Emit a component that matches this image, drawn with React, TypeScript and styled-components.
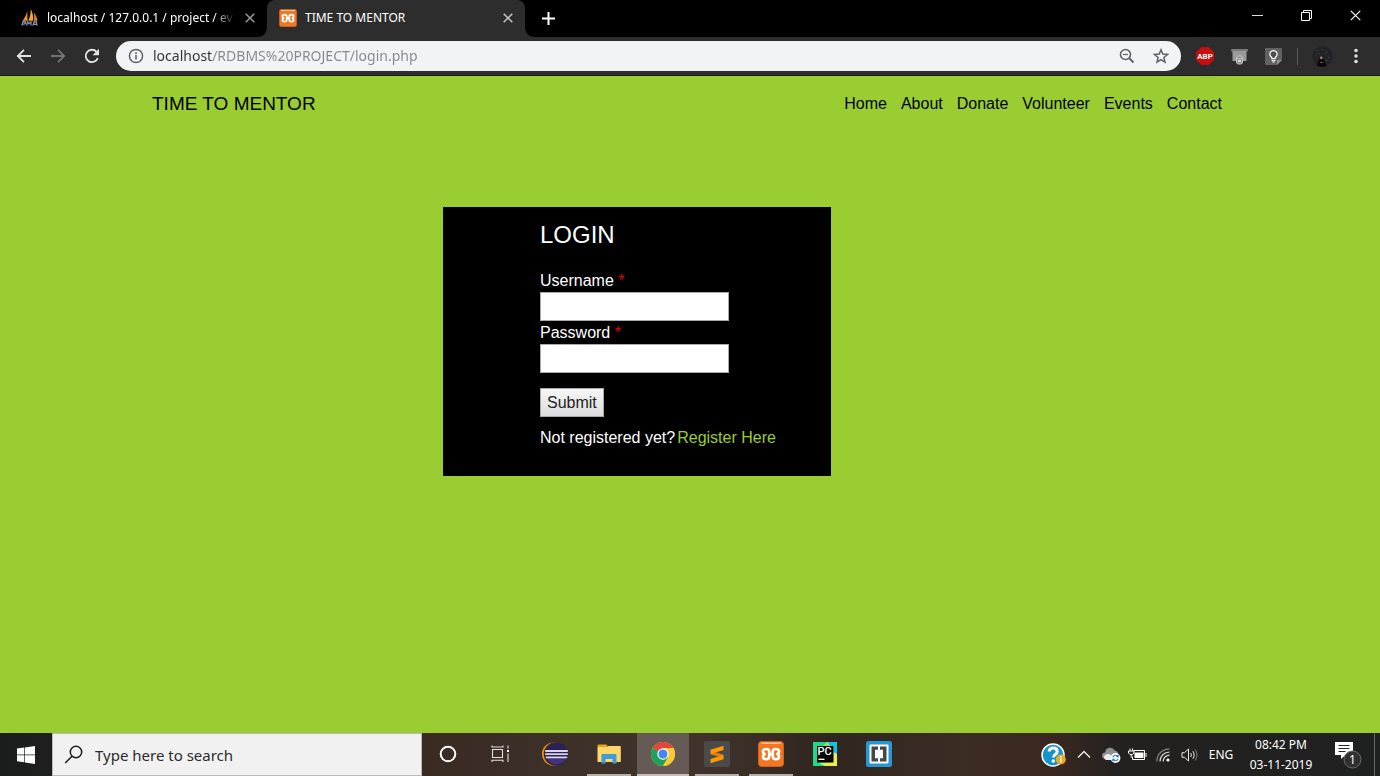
import React from "react";
import styled, { createGlobalStyle } from "styled-components";

const SYSTEM = `"Segoe UI", "Noto Sans", "Open Sans", sans-serif`;
const PAGE = `Arial, "Liberation Sans", sans-serif`;
const GREEN = "#9acd32";

const GlobalStyle = createGlobalStyle`
  *, *::before, *::after { box-sizing: border-box; }
  body { margin: 0; background: ${GREEN}; }
  button, input { font: inherit; margin: 0; }
  svg { display: block; flex: none; }
`;

const Screen = styled.div`
  display: flex;
  flex-direction: column;
  min-height: 100vh;
`;

/* ---------- browser chrome ---------- */

const BareButton = styled.button`
  display: flex;
  align-items: center;
  justify-content: center;
  padding: 0;
  border: 0;
  background: none;
  color: inherit;
`;

const TabStrip = styled.div`
  display: flex;
  height: 37px;
  background: #000;
  color: #fff;
  font: 12px/18px ${SYSTEM};
`;

const Tab = styled.div<{ $active?: boolean }>`
  display: flex;
  align-items: center;
  position: relative;
  width: ${(p) => (p.$active ? 258 : 267)}px;
  padding: 0 8px 2px ${(p) => (p.$active ? 12 : 21)}px;
  border-radius: 8px 8px 0 0;
  background: ${(p) => (p.$active ? "#2d2d2d" : "transparent")};

  ${(p) =>
    p.$active &&
    `
    &::before, &::after {
      content: "";
      position: absolute;
      bottom: 0;
      width: 8px;
      height: 8px;
    }
    &::before {
      left: -8px;
      background: radial-gradient(circle at 0 0, transparent 7px, #2d2d2d 8px);
    }
    &::after {
      right: -8px;
      background: radial-gradient(circle at 100% 0, transparent 7px, #2d2d2d 8px);
    }
  `}
`;

const TabTitle = styled.span<{ $fade?: boolean }>`
  flex: 1;
  min-width: 0;
  margin-left: 8px;
  overflow: hidden;
  white-space: nowrap;
  ${(p) => p.$fade && "mask-image: linear-gradient(to right, #000 88%, transparent 100%);"}
`;

const TabClose = styled(BareButton)<{ $dim?: boolean }>`
  width: 18px;
  height: 18px;
  margin-left: 5px;
  color: ${(p) => (p.$dim ? "#9a9a9a" : "#c8c8c8")};
`;

const NewTab = styled(BareButton)`
  width: 28px;
  margin-left: 9px;
`;

const WindowControls = styled.div`
  display: flex;
  margin-left: auto;
`;

const WindowButton = styled(BareButton)`
  width: 49px;
  padding-bottom: 6px;
`;

const Toolbar = styled.div`
  display: flex;
  align-items: center;
  height: 39px;
  padding: 0 7px;
  background: #2d2d2d;
  border-bottom: 1px solid #1b1b1b;
  color: #dedede;
`;

const NavButton = styled(BareButton)<{ $dim?: boolean }>`
  width: 34px;
  height: 30px;
  color: ${(p) => (p.$dim ? "#747474" : "#e4e4e4")};
`;

const AddressBar = styled.div`
  display: flex;
  align-items: center;
  flex: 1;
  height: 30px;
  margin: 0 7px;
  padding: 0 3px 0 12px;
  border-radius: 15px;
  background: #f1f3f4;
  color: #5f6368;
`;

const Address = styled.input`
  flex: 1;
  min-width: 0;
  height: 24px;
  margin-left: 9px;
  padding: 0;
  border: 0;
  outline: 0;
  background: linear-gradient(to right, #303134 60px, #84888c 60px);
  background-clip: text;
  -webkit-background-clip: text;
  color: transparent;
  font: 14px/24px ${SYSTEM};
`;

const ToolButton = styled(BareButton)`
  width: 34px;
  height: 30px;
`;

const Divider = styled.span`
  width: 1px;
  height: 17px;
  margin: 0 7px;
  background: #5c5c5c;
`;

/* ---------- web page ---------- */

const Page = styled.main`
  flex: 1;
  background: ${GREEN};
  color: #111;
  font: 16px/23px ${PAGE};
`;

const Header = styled.header`
  display: flex;
  align-items: center;
  justify-content: space-between;
  max-width: 1106px;
  height: 54px;
  margin: 0 auto;
  padding: 0 14px 0 15px;
`;

const Brand = styled.a`
  color: #000;
  font-size: 19px;
  text-decoration: none;
`;

const Menu = styled.nav`
  display: flex;
`;

const MenuLink = styled.a`
  padding: 7px;
  color: #000;
  text-decoration: none;
`;

const LoginArea = styled.div`
  display: grid;
  grid-template-columns: 443fr 388fr 549fr;
  padding: 77px 0 40px;
`;

const LoginForm = styled.form`
  grid-column: 2;
  display: flex;
  flex-direction: column;
  align-items: flex-start;
  padding: 14px 0 27px 25%;
  background: #000;
  color: #fff;
`;

const LoginTitle = styled.h1`
  margin: 0 0 20px;
  font-size: 24px;
  font-weight: 400;
  line-height: 28px;
`;

const FieldLabel = styled.label`
  line-height: 23px;
`;

const Required = styled.span`
  color: #e00000;
`;

const Field = styled.input`
  width: 189px;
  height: 29px;
  padding: 2px 6px;
  border: 1px solid #a9a9a9;
  background: #fff;
`;

const Submit = styled.button`
  height: 29px;
  margin: 15px 0 9px;
  padding: 0 6px;
  border: 1px solid #a9a9a9;
  background: linear-gradient(#f6f6f6, #dddddd);
  color: #222;
`;

const RegisterLine = styled.p`
  display: flex;
  gap: 2px;
  margin: 0;
  white-space: nowrap;
`;

const RegisterLink = styled.a`
  color: ${GREEN};
  text-decoration: none;
`;

/* ---------- taskbar ---------- */

const Taskbar = styled.footer`
  display: flex;
  height: 43px;
  background: linear-gradient(to right, #1b1d1d 0, #1e1e1e 52px, #3a2a22 423px, #3c3029 560px, #41332b 700px, #30261f 830px, #3b2c24 960px, #3a2820 1050px, #232120 1120px, #1f2120 100%);
  color: #fff;
  font-family: ${SYSTEM};
`;

const StartButton = styled(BareButton)`
  width: 52px;
`;

const SearchBox = styled.label`
  display: flex;
  align-items: center;
  width: 370px;
  padding: 0 11px;
  border: 1px solid #b9b9b9;
  background: #f1f1f1;
  color: #1c1c1c;
`;

const SearchInput = styled.input`
  flex: 1;
  min-width: 0;
  margin-left: 12px;
  padding: 0;
  border: 0;
  outline: 0;
  background: none;
  font-size: 15px;
  line-height: 24px;
  &::placeholder { color: #2b2b2b; opacity: 1; }
`;

const TaskGroup = styled.div<{ $apps?: boolean }>`
  display: flex;
  gap: ${(p) => (p.$apps ? 2 : 0)}px;
  margin-left: ${(p) => (p.$apps ? 3 : 0)}px;
`;

const TaskButton = styled(BareButton)<{ $open?: boolean; $active?: boolean }>`
  width: 52px;
  border-bottom: 2px solid transparent;
  ${(p) =>
    p.$open &&
    "background: linear-gradient(#b5afac, #b5afac) center bottom / 44px 2px no-repeat border-box;"}
  ${(p) => p.$active && "background: #655a54; border-bottom-color: #c3bebb;"}
`;

const Tray = styled.div`
  display: flex;
  align-items: center;
  margin-left: auto;
`;

const TrayButton = styled(BareButton)<{ $w: number }>`
  width: ${(p) => p.$w}px;
  height: 43px;
  font-size: 12px;
`;

const Clock = styled.div`
  width: 82px;
  font-size: 12px;
  line-height: 20px;
  text-align: center;
`;

const ShowDesktop = styled(BareButton)`
  width: 6px;
  height: 43px;
  border-left: 1px solid #666;
`;

/* ---------- icons ---------- */

const Cross = ({ size = 10, w = 1.5 }: { size?: number; w?: number }) => (
  <svg width={size} height={size} viewBox="0 0 10 10" fill="none" stroke="currentColor" strokeWidth={w}>
    <path d="M.7.7l8.6 8.6M9.3.7L.7 9.3" />
  </svg>
);

const PmaIcon = () => (
  <svg width="18" height="19" viewBox="0 0 19 19">
    <path d="M6.500 2.500L7 13H1.500C4 10 6 6.500 6.500 2.500z" fill="#e8932c" />
    <path d="M10.200.5c2.300 4 3 8 2.600 12.500H7.600C9.600 9 10.400 5 10.200.5z" fill="#f9a233" />
    <path d="M13.500 4c2.200 3 3.600 6 4 9h-4c.6-3 .6-6 0-9z" fill="#d9822b" />
    <path d="M1 18l1-4h2.500l.3 1.500L2.500 17M6 18l1-4 1.500 2 2-2v4M12.500 18l1.500-4h2l1 4M13.500 16.700h3" fill="none" stroke="#8b8db0" strokeWidth="1.400" />
  </svg>
);

const XamppIcon = ({ size }: { size: number }) => (
  <svg width={size} height={size} viewBox="0 0 26 26">
    <rect x=".5" y=".5" width="25" height="25" rx="3" fill="#f37623" stroke="#c9621d" />
    <path d="M2.500 1.500h21l-1 1.500h-19z" fill="#fbc39a" />
    <path
      d="M11.200 13V10.500C11.200 8.700 10 8 8.300 8 6 8 4.900 9 4.900 10.400c0 1.200.7 2 1.900 2.600-1.200.6-1.900 1.500-1.900 2.600C4.900 17.200 6 18.200 8.200 18.200c1.800 0 3-.9 3-2.700V13h3.600v2.500c0 1.800 1.200 2.700 3 2.700 2.200 0 3.300-1 3.300-2.600 0-1.100-.7-2-1.900-2.600 1.200-.6 1.900-1.400 1.900-2.600C21.100 9 20 8 17.700 8c-1.700 0-2.900.7-2.900 2.500V13"
      fill="none"
      stroke="#fff"
      strokeWidth="2.600"
      strokeLinejoin="round"
    />
  </svg>
);

const BackIcon = ({ flip }: { flip?: boolean }) => (
  <svg width="16" height="16" viewBox="0 0 16 16" fill="none" stroke="currentColor" strokeWidth="1.800">
    <path d={flip ? "M1 8h13M8 1.800L14.200 8 8 14.200" : "M15 8H2M8 1.800L1.800 8 8 14.200"} />
  </svg>
);

const ReloadIcon = () => (
  <svg width="16" height="16" viewBox="0 0 16 16">
    <path d="M13.800 10A6.200 6.200 0 1 1 12.600 3.800" fill="none" stroke="currentColor" strokeWidth="1.900" />
    <path d="M15 .8v6.400H8.600z" fill="currentColor" />
  </svg>
);

const InfoIcon = () => (
  <svg width="16" height="16" viewBox="0 0 16 16">
    <circle cx="8" cy="8" r="6.600" fill="none" stroke="currentColor" strokeWidth="1.500" />
    <path d="M8 7v4.500M8 4.300v1.600" stroke="currentColor" strokeWidth="1.600" />
  </svg>
);

const ZoomOutIcon = () => (
  <svg width="16" height="16" viewBox="0 0 16 16" fill="none" stroke="currentColor" strokeWidth="1.600">
    <circle cx="6.500" cy="6.500" r="5" />
    <path d="M4 6.500h5" strokeWidth="1.200" />
    <path d="M10 10l4.500 4.500" strokeWidth="2" />
  </svg>
);

const StarIcon = () => (
  <svg width="16" height="16" viewBox="0 0 16 16" fill="none" stroke="currentColor" strokeWidth="1.500">
    <path d="M8 1.800l1.800 4.300 4.700.4-3.600 3 1.100 4.600L8 11.700l-4 2.400 1.100-4.600-3.600-3 4.700-.4z" />
  </svg>
);

const AbpIcon = () => (
  <svg width="18" height="18" viewBox="0 0 18 18">
    <path d="M5.300 0h7.400L18 5.300v7.400L12.700 18H5.300L0 12.700V5.300z" fill="#c70d0d" />
    <text x="9" y="12" fontSize="8" fontWeight="700" fill="#fff" textAnchor="middle" fontFamily="Roboto, sans-serif">
      ABP
    </text>
  </svg>
);

const CatIcon = () => (
  <svg width="17" height="17" viewBox="0 0 17 17">
    <path d="M.5 1h16v2.500h-1V13h-14V3.500h-1z" fill="#9a9a9a" />
    <path d="M.5 1h16v2H.5z" fill="#7c7c7c" />
    <rect x="5.500" y="8" width="6" height="8" rx="2" fill="#8b8b8b" stroke="#c9c9c9" />
    <path d="M6 10.500h5" stroke="#c9c9c9" />
    <rect x="7" y="12" width="3" height="2" fill="#ddd" />
  </svg>
);

const KeepIcon = () => (
  <svg width="17" height="17" viewBox="0 0 17 17">
    <path d="M1 0h15a1 1 0 0 1 1 1v11l-5 5H1a1 1 0 0 1-1-1V1a1 1 0 0 1 1-1z" fill="#626262" />
    <path d="M12 17v-5h5z" fill="#8d8d8d" />
    <path d="M6.800 10.500V9.300a3.600 3.600 0 1 1 3.400 0v1.200z" fill="#4c4c4c" stroke="#fff" strokeWidth="1.200" />
    <path d="M6.600 12.400h3.800M7.300 14h2.400" stroke="#fff" strokeWidth="1.200" />
  </svg>
);

const AvatarIcon = () => (
  <svg width="21" height="21" viewBox="0 0 21 21">
    <circle cx="10.500" cy="10.500" r="10.300" fill="#222326" />
    <path d="M4 5l2-1M9 3l2 1M14 5l2 2M3 9l2 1M7 7l1 2M12 8l2-1M16 11l2 1M14 14l2 1" stroke="#3c3f43" fill="none" />
    <path d="M5 19.500c.8-4 2-6.800 4-7.500 3 .7 4 4 5 8-3 1.300-6 1.200-9-.5z" fill="#070707" />
    <ellipse cx="9.300" cy="11.800" rx="1.100" ry="1.500" fill="#b08d80" />
    <path d="M8.500 16.500h2" stroke="#b27a66" />
  </svg>
);

const DotsIcon = () => (
  <svg width="4" height="16" viewBox="0 0 4 16" fill="currentColor">
    <circle cx="2" cy="2.500" r="1.800" />
    <circle cx="2" cy="8" r="1.800" />
    <circle cx="2" cy="13.500" r="1.800" />
  </svg>
);

const WindowsIcon = () => (
  <svg width="18" height="18" viewBox="0 0 18 18" fill="#fff">
    <path d="M0 2.600l7.300-1v7H0zM8 1.500L18 0v8.600H8zM0 9.200h7.300v7l-7.300-1zM8 9.200h10V18L8 16.400z" />
  </svg>
);

const SearchIcon = () => (
  <svg width="19" height="19" viewBox="0 0 19 19" fill="none" stroke="currentColor" strokeWidth="1.500">
    <circle cx="12" cy="7" r="5.700" />
    <path d="M8 11.200L1.200 18" />
  </svg>
);

const CortanaIcon = () => (
  <svg width="18" height="18" viewBox="0 0 18 18">
    <circle cx="9" cy="9" r="7.300" fill="none" stroke="#fff" strokeWidth="2" />
  </svg>
);

const TaskViewIcon = () => (
  <svg width="19" height="18" viewBox="0 0 19 18" fill="none" stroke="#e2dfdd" strokeWidth="1.100">
    <path d="M1.500 4.500h10v8h-10zM1 .5v1.500h11V.5M1 17v-1.800h11V17M17 .5v3M17 8.500v8.500" />
    <path d="M16 6h2" stroke="#fff" strokeWidth="2" />
  </svg>
);

const EclipseIcon = () => (
  <svg width="26" height="24" viewBox="0 0 26 24">
    <circle cx="11.500" cy="12" r="11.500" fill="#f7941e" />
    <circle cx="13.500" cy="12" r="11.800" fill="#3b2e27" />
    <circle cx="14.500" cy="12" r="11.300" fill="#2c2255" />
    <path d="M4 15h21c-2 5-6 7.500-10.500 7.500S6 20 4 15z" fill="#41347a" />
    <path d="M3.200 9h22.600M3.200 12.200h22.600M3.800 15.400h21.400" stroke="#d9d4e8" strokeWidth="1.800" />
  </svg>
);

const FolderIcon = () => (
  <svg width="24" height="20" viewBox="0 0 24 20">
    <path d="M.5 1.500A1 1 0 0 1 1.500.5h8l1.500 2.500H.5z" fill="#e8a317" />
    <path d="M.5 3H10l1.500-1H23a.8.8 0 0 1 .8.8V18H.5z" fill="#ffd767" />
    <path d="M4.500 19.500V11a1 1 0 0 1 1-1h13a1 1 0 0 1 1 1v8.500h-4V15h-7v4.500z" fill="#3d9be0" />
  </svg>
);

const ChromeIcon = () => (
  <svg width="24" height="24" viewBox="0 0 24 24">
    <circle cx="12" cy="12" r="12" fill="#fcc934" />
    <path d="M12 12L1.600 6A12 12 0 0 1 22.400 6z" fill="#e2453b" />
    <path d="M1.600 6a12 12 0 0 0 10.400 18l5.200-9L12 12z" fill="#1fa15d" />
    <path d="M12 24a12 12 0 0 0 10.400-18H12l5.200 9z" fill="#fcc934" />
    <circle cx="12" cy="12" r="5.700" fill="#fff" />
    <circle cx="12" cy="12" r="4.500" fill="#4285f4" />
  </svg>
);

const SublimeIcon = () => (
  <svg width="26" height="26" viewBox="0 0 26 26">
    <rect width="26" height="26" rx="2" fill="#4a4a4a" />
    <path d="M6.500 8.700l13-4v4.300l-8 2.500 8 2.500v4.300l-13 4V18l8-2.500-8-2.500z" fill="#ff9800" />
    <path d="M6.500 13l5-1.500 8 2.500-5 1.500z" fill="#dd7f08" />
  </svg>
);

const PycharmIcon = () => (
  <svg width="24" height="24" viewBox="0 0 24 24">
    <rect width="24" height="24" fill="#21d789" />
    <path d="M12 0h9l3 4v8H12z" fill="#07c3f2" />
    <path d="M13 4l9 0 2 8v12H12l-6-3 14-1z" fill="#e9ee4a" />
    <path d="M14 0l-4 4h7l-2-4z" fill="#9be14d" />
    <path d="M21 4h3v8l-3.500-2z" fill="#07c3f2" />
    <rect x="4" y="4" width="16.500" height="16.500" fill="#000" />
    <text x="4.500" y="13" fontSize="11" fontWeight="500" fill="#fff" fontFamily="Roboto, sans-serif">
      PC
    </text>
    <path d="M5.500 17.300h6" stroke="#fff" strokeWidth="1.400" />
  </svg>
);

const BracketsIcon = () => (
  <svg width="26" height="26" viewBox="0 0 26 26">
    <rect width="26" height="26" rx="2.500" fill="#2597d6" />
    <rect x="3.500" y="3.500" width="19" height="19" rx="1" fill="#fff" />
    <path d="M5.500 5.500H12v3.200H9v8.600h3v3.200H5.500zM20.500 5.500H14v3.200h3v8.600h-3v3.200h6.500z" fill="#474747" />
  </svg>
);

const HelpIcon = () => (
  <svg width="25" height="24" viewBox="0 0 25 24">
    <circle cx="12" cy="12" r="11" fill="#1593cf" stroke="#fff" strokeWidth="1.500" />
    <path d="M8 8.500C8.500 5.800 10.300 5 12.200 5c2.300 0 4 1.300 4 3.400 0 3-3.700 3-3.700 6" fill="none" stroke="#fff" strokeWidth="3" />
    <circle cx="12.300" cy="18" r="1.800" fill="#fff" />
    <circle cx="19.800" cy="16.500" r="5" fill="#eaa925" />
    <path d="M19.800 15.500v4M19.800 13v1.500" stroke="#fff" strokeWidth="1.500" />
  </svg>
);

const ChevronIcon = () => (
  <svg width="14" height="9" viewBox="0 0 14 9" fill="none" stroke="#eee" strokeWidth="1.400">
    <path d="M1 7.500l6-6 6 6" />
  </svg>
);

const CloudIcon = () => (
  <svg width="19" height="16" viewBox="0 0 19 16">
    <path d="M3.500 12a3.300 3.300 0 0 1-.3-6.600 5 5 0 0 1 9.500-1.800A4 4 0 0 1 16 9z" fill="#8f8f8f" />
    <path d="M4 13a3 3 0 0 1 .8-5.800c1.800-.4 2.800 0 4.200 1l2 4.800z" fill="#ececec" />
    <circle cx="13.500" cy="11" r="4.900" fill="#fff" />
    <path d="M10.800 10.300a2.800 2.800 0 0 1 5-.8M16.200 11.700a2.800 2.800 0 0 1-5 .8M16.200 7.800v2h-2M10.800 14.200v-2h2" fill="none" stroke="#1c7cc9" strokeWidth="1.100" />
  </svg>
);

const BatteryIcon = () => (
  <svg width="19" height="13" viewBox="0 0 19 13">
    <path d="M5.500 2.500h11v9h-12v-3" fill="none" stroke="#fff" />
    <rect x="6.500" y="4.500" width="9" height="5.500" fill="#fff" />
    <path d="M18 5v4" stroke="#fff" />
    <path d="M.5 3h5.500v2L4.500 6.500H2L.5 5zM2 .5V3M4.500 .5V3M3.200 6.500v3" fill="#2a2725" stroke="#fff" />
  </svg>
);

const WifiIcon = () => (
  <svg width="14" height="14" viewBox="0 0 14 14" fill="none" stroke="#d8d8d8" strokeWidth="1.200">
    <path d="M.8 13.500A12.700 12.700 0 0 1 13.500.8" stroke="#858585" />
    <path d="M4 13.500A9.500 9.500 0 0 1 13.500 4M7.200 13.500a6.300 6.300 0 0 1 6.300-6.300" />
    <circle cx="12" cy="12" r="1.600" fill="#fff" stroke="none" />
  </svg>
);

const VolumeIcon = () => (
  <svg width="17" height="14" viewBox="0 0 17 14" fill="none" stroke="#e8e8e8" strokeWidth="1">
    <path d="M1 4.700h2.500L7.500 1v12L3.500 9.300H1zM9.700 5c.8 1.200.8 2.800 0 4" />
    <path d="M11.800 3.200c1.800 2.200 1.800 5.400 0 7.600" />
    <path d="M13.900 1.500c2.700 3.200 2.700 7.800 0 11" stroke="#8a8a8a" />
  </svg>
);

const NoticeIcon = () => (
  <svg width="28" height="28" viewBox="0 0 28 28">
    <path d="M1 1h18v13h-7.500L7 18v-4H1z" fill="#fff" />
    <path d="M4.500 4.500h11M4.500 7.500h11M4.500 10.500h7" stroke="#262626" />
    <circle cx="18.500" cy="18.500" r="8.500" fill="#303030" stroke="#6d6d6d" />
    <text x="18.500" y="23" fontSize="12" fill="#fff" textAnchor="middle" fontFamily="Noto Sans, sans-serif">
      1
    </text>
  </svg>
);

const menu = ["Home", "About", "Donate", "Volunteer", "Events", "Contact"];

const apps = [
  { name: "Eclipse", icon: <EclipseIcon /> },
  { name: "File Explorer", icon: <FolderIcon />, open: true },
  { name: "Google Chrome", icon: <ChromeIcon />, active: true },
  { name: "Sublime Text", icon: <SublimeIcon />, open: true },
  { name: "XAMPP", icon: <XamppIcon size={26} />, open: true },
  { name: "PyCharm", icon: <PycharmIcon /> },
  { name: "Brackets", icon: <BracketsIcon /> },
];

export default function App() {
  return (
    <Screen>
      <GlobalStyle />
      <TabStrip>
        <Tab>
          <PmaIcon />
          <TabTitle $fade>localhost / 127.0.0.1 / project / ev</TabTitle>
          <TabClose $dim aria-label="Close tab"><Cross /></TabClose>
        </Tab>
        <Tab $active>
          <XamppIcon size={18} />
          <TabTitle>TIME TO MENTOR</TabTitle>
          <TabClose aria-label="Close tab"><Cross /></TabClose>
        </Tab>
        <NewTab aria-label="New tab">
          <svg width="13" height="13" viewBox="0 0 13 13" stroke="#fff" strokeWidth="2">
            <path d="M6.500 0v13M0 6.500h13" />
          </svg>
        </NewTab>
        <WindowControls>
          <WindowButton aria-label="Minimize">
            <svg width="11" height="11" viewBox="0 0 11 11" stroke="#ddd"><path d="M0 5.500h11" /></svg>
          </WindowButton>
          <WindowButton aria-label="Restore">
            <svg width="11" height="11" viewBox="0 0 11 11" fill="none" stroke="#fff">
              <path d="M.5 2.500h8v8h-8zM2.500 2.500v-2h8v8h-2" />
            </svg>
          </WindowButton>
          <WindowButton aria-label="Close"><Cross size={11} w={1} /></WindowButton>
        </WindowControls>
      </TabStrip>

      <Toolbar>
        <NavButton aria-label="Back"><BackIcon /></NavButton>
        <NavButton $dim aria-label="Forward"><BackIcon flip /></NavButton>
        <NavButton aria-label="Reload"><ReloadIcon /></NavButton>
        <AddressBar>
          <InfoIcon />
          <Address aria-label="Address" defaultValue="localhost/RDBMS%20PROJECT/login.php" />
          <ToolButton aria-label="Zoom"><ZoomOutIcon /></ToolButton>
          <ToolButton aria-label="Bookmark"><StarIcon /></ToolButton>
        </AddressBar>
        <ToolButton aria-label="Adblock Plus"><AbpIcon /></ToolButton>
        <ToolButton aria-label="Extension"><CatIcon /></ToolButton>
        <ToolButton aria-label="Keep"><KeepIcon /></ToolButton>
        <Divider />
        <ToolButton aria-label="Profile"><AvatarIcon /></ToolButton>
        <ToolButton aria-label="Menu"><DotsIcon /></ToolButton>
      </Toolbar>

      <Page>
        <Header>
          <Brand href="#">TIME TO MENTOR</Brand>
          <Menu>
            {menu.map((item) => (
              <MenuLink href="#" key={item}>{item}</MenuLink>
            ))}
          </Menu>
        </Header>
        <LoginArea>
          <LoginForm onSubmit={(e: React.FormEvent) => e.preventDefault()}>
            <LoginTitle>LOGIN</LoginTitle>
            <FieldLabel htmlFor="username">Username <Required>*</Required></FieldLabel>
            <Field id="username" type="text" required />
            <FieldLabel htmlFor="password">Password <Required>*</Required></FieldLabel>
            <Field id="password" type="password" required />
            <Submit type="submit">Submit</Submit>
            <RegisterLine>
              Not registered yet? <RegisterLink href="#">Register Here</RegisterLink>
            </RegisterLine>
          </LoginForm>
        </LoginArea>
      </Page>

      <Taskbar>
        <StartButton aria-label="Start"><WindowsIcon /></StartButton>
        <SearchBox>
          <SearchIcon />
          <SearchInput type="text" placeholder="Type here to search" aria-label="Search" />
        </SearchBox>
        <TaskGroup>
          <TaskButton aria-label="Cortana"><CortanaIcon /></TaskButton>
          <TaskButton aria-label="Task View"><TaskViewIcon /></TaskButton>
        </TaskGroup>
        <TaskGroup $apps>
          {apps.map((a) => (
            <TaskButton key={a.name} aria-label={a.name} $open={a.open} $active={a.active}>
              {a.icon}
            </TaskButton>
          ))}
        </TaskGroup>
        <Tray>
          <TrayButton $w={34} aria-label="Help"><HelpIcon /></TrayButton>
          <TrayButton $w={28} aria-label="Hidden icons"><ChevronIcon /></TrayButton>
          <TrayButton $w={26} aria-label="OneDrive"><CloudIcon /></TrayButton>
          <TrayButton $w={26} aria-label="Battery"><BatteryIcon /></TrayButton>
          <TrayButton $w={26} aria-label="Network"><WifiIcon /></TrayButton>
          <TrayButton $w={26} aria-label="Volume"><VolumeIcon /></TrayButton>
          <TrayButton $w={38}>ENG</TrayButton>
          <Clock>08:42 PM<br />03-11-2019</Clock>
          <TrayButton $w={52} aria-label="Notifications"><NoticeIcon /></TrayButton>
          <ShowDesktop aria-label="Show desktop" />
        </Tray>
      </Taskbar>
    </Screen>
  );
}
